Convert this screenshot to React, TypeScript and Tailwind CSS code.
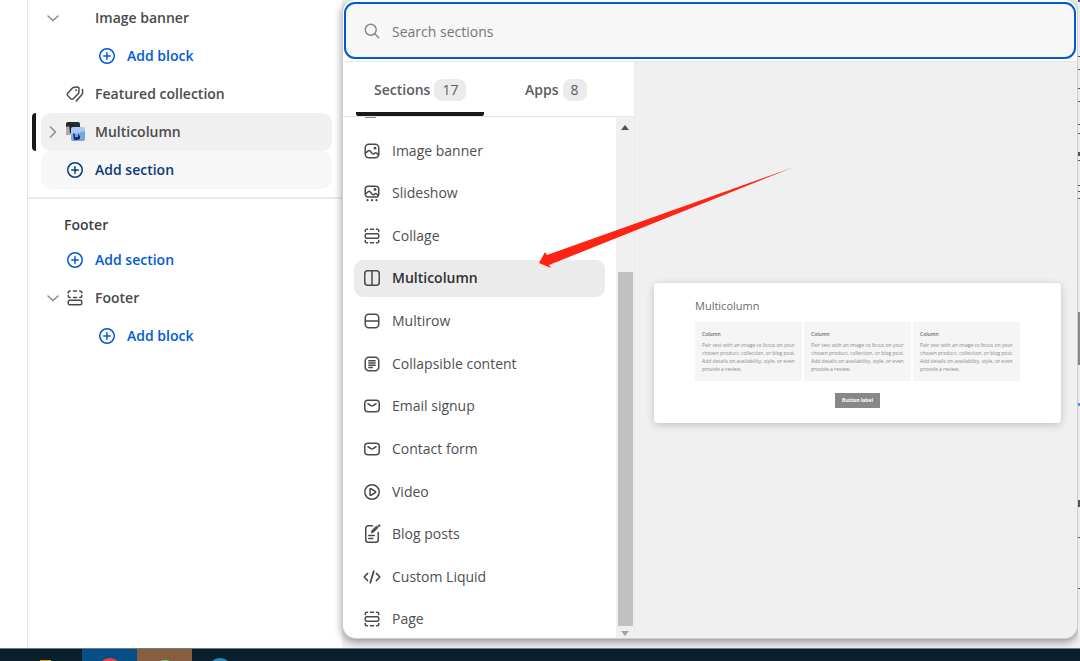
import { useState, type ReactNode } from 'react';

type IconName =
  | 'image'
  | 'slideshow'
  | 'section'
  | 'columns'
  | 'rows'
  | 'text'
  | 'email'
  | 'video'
  | 'blog'
  | 'code'
  | 'plus'
  | 'tags'
  | 'footer'
  | 'down'
  | 'right'
  | 'search';

const iconShapes: Record<IconName, ReactNode> = {
  image: (
    <>
      <rect x="3.25" y="3.25" width="13.5" height="13.5" rx="3.5" />
      <path d="M3.5 12.2l2.6-2.3c.6-.5 1.4-.5 2 0l2.2 2.6c.5.6 1.3.6 1.9.1l.6-.5c.6-.5 1.4-.4 1.9.1l1.8 1.8" />
      <circle cx="13" cy="7.2" r="1.4" fill="currentColor" stroke="none" />
    </>
  ),
  slideshow: (
    <>
      <path d="M5 14a3 3 0 0 1-1.75-2.8v-5a3 3 0 0 1 3-3h7.5a3 3 0 0 1 3 3v5A3 3 0 0 1 15 14H5z" />
      <path d="M3.5 11l2.6-2.2c.6-.5 1.4-.5 2 0l2.2 2.5c.5.6 1.3.6 1.9.1l.6-.5c.6-.5 1.4-.4 1.9.1l1.6 1.4" />
      <circle cx="13" cy="6.5" r="1.4" fill="currentColor" stroke="none" />
      <path d="M5.5 17.2h.01M10 17.2h.01M14.5 17.2h.01" strokeWidth="2.2" />
    </>
  ),
  section: (
    <>
      <rect x="3.25" y="7.75" width="13.5" height="4.5" rx="1.5" />
      <path d="M3.25 5.5V5c0-1 .75-1.75 1.75-1.75h.5M8.5 3.25h3M14.5 3.25h.5c1 0 1.75.75 1.75 1.75v.5M3.25 14.5v.5c0 1 .75 1.75 1.75 1.75h.5M8.5 16.75h3M14.5 16.75h.5c1 0 1.75-.75 1.75-1.75v-.5" />
    </>
  ),
  footer: (
    <>
      <rect x="3.25" y="12.25" width="13.5" height="4.5" rx="1.5" />
      <path d="M3.25 5v-.25c0-1 .75-1.75 1.75-1.75h.25M8.5 3h3M14.75 3H15c1 0 1.75.75 1.75 1.75V5M3.25 7.5v.25c0 1 .75 1.75 1.75 1.75h.25M8.5 9.5h3M14.75 9.5H15c1 0 1.75-.75 1.75-1.75V7.5" />
    </>
  ),
  columns: (
    <>
      <rect x="2.75" y="2.75" width="14.5" height="14.5" rx="3" />
      <path d="M10 3v14" />
    </>
  ),
  rows: (
    <>
      <rect x="3.25" y="3.25" width="13.5" height="13.5" rx="3.5" />
      <path d="M3.5 10h13" />
    </>
  ),
  text: (
    <>
      <rect x="3.25" y="3.25" width="13.5" height="13.5" rx="3.5" />
      <path d="M6.75 6.75h6.5M6.75 9h6.5M6.75 11.25h6.5M6.75 13.5h3.75" strokeWidth="1.3" />
    </>
  ),
  email: (
    <>
      <rect x="2.75" y="4.25" width="14.5" height="11.5" rx="3.25" />
      <path d="M6 7.75l2.9 1.9c.7.45 1.5.45 2.2 0L14 7.75" />
    </>
  ),
  video: (
    <>
      <circle cx="10" cy="10" r="7.25" />
      <path d="M8 7.3c0-.5.5-.8.95-.55l4.3 2.6c.5.3.5 1 0 1.3l-4.3 2.6c-.45.25-.95-.05-.95-.55z" />
    </>
  ),
  blog: (
    <>
      <path d="M10.5 1.75H6.25a2.5 2.5 0 0 0-2.5 2.5v11.5a2.5 2.5 0 0 0 2.500 2.500h7.5a2.5 2.5 0 0 0 2.500-2.500V8.5" />
      <path d="M6.75 11.5h5.5M6.75 14.5h4" />
      <path d="M9.5 8.5l.7-2.3L14.6 2l1.5 1.5-4.3 4.3z" fill="currentColor" strokeWidth="1" />
      <path d="M17 1.8l.3-.3" strokeWidth="2.2" />
    </>
  ),
  code: <path d="M5.5 6.5L2.25 10l3.25 3.5M14.5 6.5L17.75 10l-3.25 3.5M11.75 4.25l-3.5 11.5" strokeWidth="1.8" />,
  plus: (
    <>
      <circle cx="10" cy="10" r="7.25" />
      <path d="M10 6.75v6.5M6.75 10h6.5" />
    </>
  ),
  tags: (
    <>
      <path d="M8.3 3.6l3.8-.7c1.2-.1 2 .7 1.9 1.9l-.2 3.600c0 .5-.3 1-.6 1.300l-4.900 5c-.7.700-1.800.7-2.500 0l-3-3c-.7-.7-.7-1.800 0-2.500l4.200-4.700c.4-.5.800-.8 1.300-.9z" />
      <circle cx="11" cy="6.2" r=".9" fill="currentColor" stroke="none" />
      <path d="M17.500 5.500l.1 3.200c0 .7-.2 1.200-.6 1.700l-5.700 6.600" />
    </>
  ),
  down: <path d="M5 8l5 4.500L15 8" />,
  right: <path d="M7.500 5l5 5-5 5" />,
  search: (
    <>
      <circle cx="8.750" cy="8.750" r="5.500" />
      <path d="M12.800 12.800l3.900 3.900" />
    </>
  ),
};

function Icon({ name, className = '' }: { name: IconName; className?: string }) {
  return (
    <svg
      viewBox="0 0 20 20"
      className={`h-5 w-5 shrink-0 ${className}`}
      fill="none"
      stroke="currentColor"
      strokeWidth="1.5"
      strokeLinecap="round"
      strokeLinejoin="round"
      aria-hidden="true"
    >
      {iconShapes[name]}
    </svg>
  );
}

// Small stacked-photo thumbnail used for the multicolumn section
function Thumbnail() {
  return (
    <svg viewBox="0 0 20 20" className="h-5 w-5 shrink-0" aria-hidden="true">
      <rect x="1" y="0" width="14" height="13" rx="2" fill="#1d2b33" />
      <path d="M1 5l4-1 2 3v6H3a2 2 0 0 1-2-2z" fill="#b9a7a5" />
      <path d="M4 2l5 1v9l-4-1z" fill="#17222b" />
      <rect x="6" y="5" width="14" height="14" rx="2" fill="#a9c8f5" />
      <path d="M6 13l14-4v8a2 2 0 0 1-2 2H8a2 2 0 0 1-2-2z" fill="#7ba3e0" />
      <path d="M8 11l2 1v3h3v-3l2 2v3l-3 1H9z" fill="#14306e" />
    </svg>
  );
}

interface TreeRowProps {
  label: string;
  icon?: ReactNode;
  chevron?: 'down' | 'right';
  tone?: 'default' | 'link' | 'hover';
  nested?: boolean;
  selected?: boolean;
}

function TreeRow({ label, icon, chevron, tone = 'default', nested, selected }: TreeRowProps) {
  const color = tone === 'link' ? 'text-[#005bd3]' : tone === 'hover' ? 'text-[#0b3a78]' : 'text-[#4a4a4a]';
  const background = selected ? 'bg-[#f0f0f0]' : tone === 'hover' ? 'bg-[#f7f7f7]' : '';

  return (
    <li className="flex h-[38px] pl-1">
      <span className={`mr-[5px] w-1 rounded-l-sm ${selected ? 'bg-[#1a1a1a]' : ''}`} />
      <button className={`mr-[10px] flex flex-1 items-center rounded-[10px] text-left font-semibold ${color} ${background}`}>
        <span className={`flex shrink-0 justify-center text-[#8a8a8a] ${nested ? 'w-14' : 'w-6'}`}>
          {chevron && <Icon name={chevron} />}
        </span>
        <span className="h-5 w-5 shrink-0">{icon}</span>
        <span className="ml-[10px]">{label}</span>
      </button>
    </li>
  );
}

function Sidebar() {
  return (
    <aside className="flex w-[342px] shrink-0 bg-white pl-[27px]">
      <nav className="flex-1 border-l border-[#e6e6e6]">
        <ul className="-mt-px pb-2">
          <TreeRow label="Image banner" chevron="down" />
          <TreeRow label="Add block" icon={<Icon name="plus" />} tone="link" nested />
          <TreeRow label="Featured collection" icon={<Icon name="tags" />} />
          <TreeRow label="Multicolumn" icon={<Thumbnail />} chevron="right" selected />
          <TreeRow label="Add section" icon={<Icon name="plus" />} tone="hover" />
        </ul>
        <div className="border-t-2 border-[#ebebeb] pt-[10px]">
          <h2 className="pl-9 leading-8 font-semibold text-[#404040]">Footer</h2>
          <ul>
            <TreeRow label="Add section" icon={<Icon name="plus" />} tone="link" />
            <TreeRow label="Footer" icon={<Icon name="footer" />} chevron="down" />
            <TreeRow label="Add block" icon={<Icon name="plus" />} tone="link" nested />
          </ul>
        </div>
      </nav>
    </aside>
  );
}

const sections: { label: string; icon: IconName }[] = [
  { label: 'Image banner', icon: 'image' },
  { label: 'Slideshow', icon: 'slideshow' },
  { label: 'Collage', icon: 'section' },
  { label: 'Multicolumn', icon: 'columns' },
  { label: 'Multirow', icon: 'rows' },
  { label: 'Collapsible content', icon: 'text' },
  { label: 'Email signup', icon: 'email' },
  { label: 'Contact form', icon: 'email' },
  { label: 'Video', icon: 'video' },
  { label: 'Blog posts', icon: 'blog' },
  { label: 'Custom Liquid', icon: 'code' },
  { label: 'Page', icon: 'section' },
];

function Scrollbar() {
  return (
    <div className="flex w-[18px] shrink-0 flex-col items-center bg-[#f0f0f0] pt-2" aria-hidden="true">
      <svg viewBox="0 0 8 5" className="h-[5px] w-2 fill-[#505050]">
        <path d="M0 5l4-5 4 5z" />
      </svg>
      <div className="flex w-[15px] flex-1 flex-col pt-[142px]">
        <div className="flex-1 bg-[#c1c1c1]" />
      </div>
      <svg viewBox="0 0 8 5" className="mt-[5px] mb-[2px] h-[5px] w-2 fill-[#a3a3a3]">
        <path d="M0 0l4 5 4-5z" />
      </svg>
    </div>
  );
}

function PreviewCard({ title }: { title: string }) {
  return (
    <div className="w-full rounded-[4px] bg-white px-[41px] pt-[15px] pb-[15px] text-[#6b6b6b] shadow-[0_2px_8px_rgba(0,0,0,0.2)]">
      <h3 className="text-[11px] leading-4">{title}</h3>
      <div className="mt-2 grid grid-cols-3 gap-[2px]">
        {[0, 1, 2].map((column) => (
          <div key={column} className="bg-[#f5f5f5] pt-2 pr-1 pb-2 pl-[7px] text-[5px] leading-[8px]">
            <h4 className="mb-[3px] font-semibold">Column</h4>
            <p className="text-[#8a8a8a]">
              Pair text with an image to focus on your
              <br />
              chosen product, collection, or blog post.
              <br />
              Add details on availability, style, or even
              <br />
              provide a review.
            </p>
          </div>
        ))}
      </div>
      <div className="mt-3 flex justify-center">
        <button className="h-[15px] w-[45px] bg-[#888888] text-[5px] leading-[15px] font-bold text-white">Button label</button>
      </div>
    </div>
  );
}

function SectionPicker() {
  const [active, setActive] = useState('Multicolumn');

  return (
    <div className="flex min-w-0 flex-1 flex-col overflow-hidden rounded-b-[14px] rounded-t-[12px] border-b border-l border-r border-[#cfcfcf] bg-white shadow-[0_3px_8px_rgba(0,0,0,0.4)]">
      <div className="border-b border-[#e6e6e6] px-[1px] pt-[2px] pb-[2px]">
        <label className="flex h-[57px] items-center rounded-[11px] border-2 border-[#005bd3] bg-[#f7f7f7] pl-4">
          <Icon name="search" className="text-[#8a8a8a]" />
          <input
            type="text"
            placeholder="Search sections"
            aria-label="Search sections"
            className="ml-[10px] flex-1 bg-transparent pt-[2px] outline-none placeholder:text-[#757575]"
          />
        </label>
      </div>

      <div className="flex min-h-0 flex-1">
        <div className="flex w-[291px] shrink-0 flex-col">
          <div role="tablist" className="flex h-[55px] border-b border-[#e6e6e6] pl-[13px] font-semibold text-[#5c5c5c]">
            <button
              role="tab"
              aria-selected="true"
              className="flex w-32 items-center rounded-b-[2px] border-b-4 border-[#1a1a1a] pt-[6px] pl-[18px]"
            >
              Sections
              <span className="ml-1 rounded-lg bg-[#ebebeb] px-2 leading-[22px] font-normal">17</span>
            </button>
            <button role="tab" aria-selected="false" className="ml-[23px] flex items-center pt-[2px] pl-[18px]">
              Apps
              <span className="ml-1 rounded-lg bg-[#ebebeb] px-2 leading-[22px] font-normal">8</span>
            </button>
          </div>
          <div className="flex min-h-0 flex-1">
            <div className="flex flex-1 flex-col px-[11px]">
              {/* Bottom edge of the icon scrolled out of view */}
              <span className="ml-[11px] h-px w-[11px] bg-[#8a8a8a]" />
              <ul className="flex flex-1 flex-col justify-between pt-[14px]">
                {sections.map(({ label, icon }) => (
                  <li key={label}>
                    <button
                      onClick={() => setActive(label)}
                      className={`flex h-[37px] w-full items-center rounded-[9px] pl-2 text-left ${
                        active === label ? 'bg-[#ebebeb] font-semibold text-[#303030]' : 'text-[#4f4f4f]'
                      }`}
                    >
                      <Icon name={icon} className="text-[#4a4a4a]" />
                      <span className="ml-[10px]">{label}</span>
                    </button>
                  </li>
                ))}
              </ul>
            </div>
            <Scrollbar />
          </div>
        </div>

        <div className="flex flex-1 items-center border-l border-[#ebebeb] bg-[#f0f0f0] pt-[5px] pr-4 pl-[19px]">
          <PreviewCard title={active} />
        </div>
      </div>
    </div>
  );
}

function Taskbar() {
  return (
    <footer className="flex h-[13px] shrink-0 overflow-hidden border-t border-[#6f7c85] bg-[#0a1f2d] pl-[27px]">
      <button aria-label="Files" className="flex w-[55px] items-end pl-[13px]">
        <span className="h-px w-[11px] bg-[#d9a400]" />
      </button>
      <button aria-label="Browser" className="flex w-[55px] justify-center bg-[#054e86] pt-[9px]">
        <span className="h-6 w-6 shrink-0 rounded-full bg-[#ea4335]" />
      </button>
      <button aria-label="Chat" className="flex w-[55px] justify-center bg-[#865f43] pt-[11px]">
        <span className="h-6 w-6 shrink-0 rounded-full bg-[#5ee06f]" />
      </button>
      <button aria-label="Mail" className="flex w-[55px] justify-center pt-[9px]">
        <span className="h-6 w-6 shrink-0 rounded-full bg-[#2a8ac4]" />
      </button>
    </footer>
  );
}

export default function App() {
  return (
    <div className="relative flex h-screen flex-col overflow-hidden bg-white font-['Open_Sans','Noto_Sans',sans-serif] text-[14px] leading-5">
      <div className="flex min-h-0 flex-1">
        <Sidebar />
        <main className="flex min-w-0 flex-1 bg-[#f1f1f1] pb-[9px]">
          <SectionPicker />
          {/* Sliver of the page behind the picker */}
          <svg width="2" height="640" className="shrink-0" aria-hidden="true">
            <rect width="2" height="640" fill="#ececec" />
            <path
              d="M1 0v2M1 56v1M1 69v1M1 88v1M1 101v1M1 124v1M1 133v1M1 152v4M1 160v1M1 185v1M1 191v1M1 198v1M1 500v7M1 537v1M1 588v1"
              stroke="#555"
              strokeWidth="2"
            />
            <path d="M1 312v53" stroke="#888" strokeWidth="2" />
            <path d="M1 403v3" stroke="#5b8def" strokeWidth="2" />
          </svg>
        </main>
      </div>
      <Taskbar />

      <svg
        viewBox="0 0 256 102"
        className="pointer-events-none absolute top-[167px] left-[539px] h-[102px] w-64"
        fill="#ff2314"
        aria-hidden="true"
      >
        <path d="M0 96L6 85l2 3L255 0 10 98l2 3z" />
      </svg>
    </div>
  );
}
